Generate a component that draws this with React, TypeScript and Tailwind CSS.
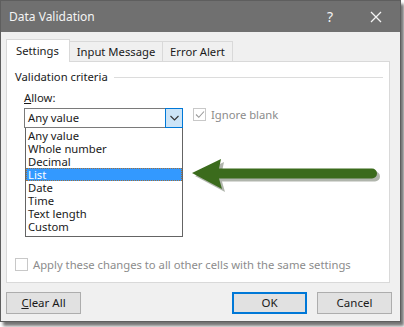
import React from "react";

const font = { fontFamily: '"Noto Sans", "Open Sans", sans-serif' };

function Btn({ children, primary }: { children: React.ReactNode; primary?: boolean }) {
  return (
    <div
      className={
        "w-[75px] h-[22px] flex items-center justify-center bg-[#e1e1e1] text-[11.5px] text-[#1a1a1a] " +
        (primary ? "border-2 border-[#0078d7]" : "border border-[#adadad]")
      }
    >
      {children}
    </div>
  );
}

export default function App() {
  const items = ["Any value", "Whole number", "Decimal", "List", "Date", "Time", "Text length", "Custom"];
  return (
    <div className="w-[404px] h-[327px] bg-white overflow-hidden" style={font}>
      <div className="w-[401px] h-[322px] border border-[#5e5e5e] bg-[#f0f0f0] shadow-[3px_4px_3px_rgba(0,0,0,0.55)] flex flex-col">
        {/* Title bar */}
        <div className="h-[31px] bg-[#707070] flex items-center text-[#f4f4f4] shrink-0">
          <div className="pl-[8px] text-[12px] flex-1 leading-none">Data Validation</div>
          <div className="w-[14px] text-[14px] leading-none mr-[29px]">?</div>
          <svg width="12" height="12" viewBox="0 0 12 12" className="mr-[18px]">
            <path d="M1 1 L11 11 M11 1 L1 11" stroke="#f4f4f4" strokeWidth="1.3" />
          </svg>
        </div>
        {/* Tabs */}
        <div className="flex items-end h-[23px] mt-[6px] pl-[5px] shrink-0">
          <div className="h-[23px] w-[64px] bg-white border border-b-0 border-[#d9d9d9] text-[11.25px] text-[#1a1a1a] flex items-center pl-[9px] relative z-10 mb-[-1px] leading-none">
            Settings
          </div>
          <div className="h-[20px] w-[93px] bg-[#f0f0f0] border border-l-0 border-b-0 border-[#d9d9d9] text-[11.25px] text-[#1a1a1a] flex items-center justify-center leading-none">
            Input Message
          </div>
          <div className="h-[20px] w-[70px] bg-[#f0f0f0] border border-l-0 border-b-0 border-[#d9d9d9] text-[11.25px] text-[#1a1a1a] flex items-center justify-center leading-none">
            Error Alert
          </div>
        </div>
        {/* Panel */}
        <div className="ml-[5px] w-[384px] h-[222px] bg-white border border-[#d9d9d9] shrink-0 relative">
          <div className="flex items-center mt-[7px] ml-[8px] mr-[6px]">
            <span className="text-[11.25px] text-[#1a1a1a] leading-[16px]">Validation criteria</span>
            <div className="flex-1 h-px bg-[#dcdcdc] ml-[6px]"></div>
          </div>
          <div className="flex mt-[5px] ml-[17px]">
            <div className="flex flex-col">
              <div className="text-[11.25px] text-[#1a1a1a] leading-[16px]">
                <span className="underline">A</span>llow:
              </div>
              <div className="mt-[2px] w-[159px] h-[20px] border border-[#7a7a7a] flex items-stretch bg-white">
                <div className="flex-1 text-[11.25px] text-[#1a1a1a] pl-[3px] flex items-center leading-none">Any value</div>
                <div className="w-[18px] bg-[#cce4f7] border border-[#0078d7] m-[-1px] flex items-center justify-center">
                  <svg width="9" height="6" viewBox="0 0 9 6">
                    <path d="M0.5 1 L4.5 5 L8.5 1" stroke="#333" strokeWidth="1.1" fill="none" />
                  </svg>
                </div>
              </div>
              <div className="ml-[1px] w-[158px] h-[109px] border border-[#646464] border-t-0 bg-white pt-[1px] flex flex-col">
                {items.map((it) =>
                  it === "List" ? (
                    <div
                      key={it}
                      className="h-[13px] bg-[#3399ff] text-white text-[11.25px] leading-[13px] pl-[2px] outline-1 outline-dotted outline-[#a0703a] -outline-offset-1"
                    >
                      {it}
                    </div>
                  ) : (
                    <div key={it} className="h-[13px] text-[#1a1a1a] text-[11.25px] leading-[13px] pl-[2px]">
                      {it}
                    </div>
                  )
                )}
              </div>
            </div>
            <div className="flex items-start ml-[10px] mt-[18px]">
              <div className="w-[13px] h-[13px] border border-[#c8c8c8] bg-white flex items-center justify-center">
                <svg width="10" height="9" viewBox="0 0 10 9">
                  <path d="M1 4.5 L3.8 7.3 L9 1.5" stroke="#9a9a9a" strokeWidth="1.1" fill="none" />
                </svg>
              </div>
              <span className="ml-[5px] text-[11.25px] text-[#8c8c8c] leading-[13px]">Ignore blank</span>
            </div>
          </div>
          {/* Arrow overlay */}
          <svg className="absolute left-[182px] top-[94px]" width="200" height="40" viewBox="0 0 200 40">
            <g transform="translate(3,3)" fill="#1d2a12" opacity="0.35">
              <path d="M3 17 L32 3 L30 12.5 L183 12.5 A5 5 0 0 1 183 22.5 L30 22.5 L33 33 Z" />
            </g>
            <path d="M3 17 L32 3 L30 12.5 L183 12.5 A5 5 0 0 1 183 22.5 L30 22.5 L33 33 Z" fill="#3b6b1c" />
          </svg>
          <div className="absolute left-[8px] top-[196px] flex items-center">
            <div className="w-[13px] h-[13px] border border-[#c8c8c8] bg-white"></div>
            <span className="ml-[5px] text-[11.25px] text-[#8c8c8c] leading-[13px]">
              Apply these changes to all other cells with the same settings
            </span>
          </div>
        </div>
        {/* Buttons */}
        <div className="flex mt-[9px] ml-[5px]">
          <Btn>
            <span className="underline">C</span>lear All
          </Btn>
          <div className="flex-1"></div>
          <Btn primary>OK</Btn>
          <div className="w-[10px]"></div>
          <Btn>Cancel</Btn>
          <div className="w-[8px]"></div>
        </div>
      </div>
    </div>
  );
}
